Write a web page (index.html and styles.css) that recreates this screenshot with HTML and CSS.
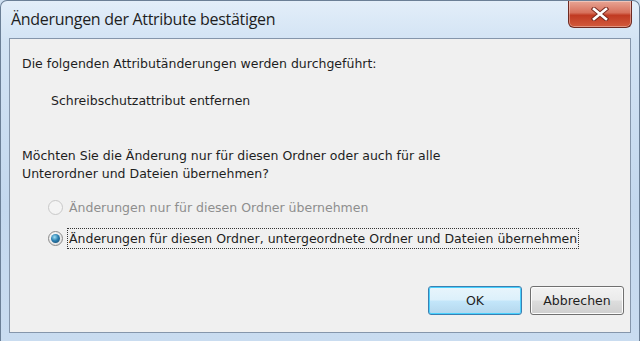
FILE: index.html
```html
<!DOCTYPE html>
<html lang="de">
<head>
    <meta charset="UTF-8">
    <title>Änderungen der Attribute bestätigen</title>
    <link rel="stylesheet" href="styles.css">
</head>
<body>
    <div class="window">
        <div class="titlebar">
            <span class="title">Änderungen der Attribute bestätigen</span>
            <button class="close-btn" aria-label="Schließen">
                <svg width="18" height="14" viewBox="0 0 18 14">
                    <path d="M3 2 L15 12 M15 2 L3 12" stroke="#7a2a20" stroke-width="4.5" stroke-linecap="square"/>
                    <path d="M3 2 L15 12 M15 2 L3 12" stroke="#ffffff" stroke-width="2.6" stroke-linecap="square"/>
                </svg>
            </button>
        </div>
        <div class="client">
            <p class="intro">Die folgenden Attributänderungen werden durchgeführt:</p>
            <p class="change">Schreibschutzattribut entfernen</p>
            <p class="question">Möchten Sie die Änderung nur für diesen Ordner oder auch für alle<br>Unterordner und Dateien übernehmen?</p>

            <div class="options">
                <label class="option disabled">
                    <span class="radio"></span>
                    <span class="option-text">Änderungen nur für diesen Ordner übernehmen</span>
                </label>
                <label class="option">
                    <span class="radio checked"></span>
                    <span class="option-text focused">Änderungen für diesen Ordner, untergeordnete Ordner und Dateien übernehmen</span>
                </label>
            </div>

            <div class="buttons">
                <button class="btn default">OK</button>
                <button class="btn">Abbrechen</button>
            </div>
        </div>
    </div>
</body>
</html>
```

FILE: styles.css
```css
body {
    margin: 0;
    width: 640px;
    height: 341px;
    overflow: hidden;
    background-color: #cfe0f1;
}
.window {
    box-sizing: border-box;
    width: 640px;
    height: 341px;
    display: flex;
    flex-direction: column;
    padding: 0 8px 8px 8px;
    border: 1px solid #6b7f96;
    border-bottom: none;
    border-radius: 7px 7px 0 0;
    background: linear-gradient(180deg, #e3eef9 0%, #d2e3f4 12%, #c4d8ee 60%, #c9dcf0 100%);
}
.titlebar {
    height: 37px;
    display: flex;
    align-items: flex-start;
}
.title {
    margin-top: 7px;
    margin-left: 2px;
    font-family: "Open Sans", sans-serif;
    font-size: 16px;
    letter-spacing: -0.3px;
    color: #1e1e1e;
}
.close-btn {
    margin-left: auto;
    margin-right: -1px;
    width: 64px;
    height: 27px;
    padding: 0;
    border: 1px solid #6e2a22;
    border-top: none;
    border-radius: 0 0 6px 6px;
    background: linear-gradient(180deg, #e8a595 0%, #d7715c 45%, #c13a22 55%, #d25a3c 100%);
    box-shadow: inset 0 0 0 1px rgba(255,255,255,0.35);
    display: flex;
    align-items: center;
    justify-content: center;
}
.client {
    flex: 1;
    display: flex;
    flex-direction: column;
    border: 1px solid #8596ab;
    background-color: #f0f0f0;
    padding: 0 6px 0 12px;
    font-family: "DejaVu Sans", sans-serif;
    font-size: 12.5px;
    color: #1e1e1e;
}
.client p {
    margin: 0;
}
.intro {
    margin-top: 17px !important;
}
.change {
    margin-top: 22px !important;
    margin-left: 29px !important;
}
.question {
    margin-top: 39px !important;
    line-height: 18px;
}
.options {
    margin-top: 14px;
    margin-left: 26px;
    display: flex;
    flex-direction: column;
    gap: 10px;
}
.option {
    display: flex;
    align-items: center;
    gap: 4px;
}
.option.disabled {
    color: #8e8e8e;
}
.radio {
    box-sizing: border-box;
    width: 15px;
    height: 15px;
    border-radius: 50%;
    border: 1px solid #8a8a8a;
    background: radial-gradient(circle at 40% 35%, #ffffff 0%, #e4e4e4 70%, #d0d0d0 100%);
    display: flex;
    align-items: center;
    justify-content: center;
}
.option.disabled .radio {
    border-color: #c8c8c8;
    background: #f4f4f4;
}
.radio.checked::after {
    content: "";
    width: 9px;
    height: 9px;
    border-radius: 50%;
    background: radial-gradient(circle at 40% 35%, #9fe0f5 0%, #2b7fb0 45%, #0f3f62 100%);
}
.option-text {
    padding: 2px 1px;
    border: 1px dotted transparent;
}
.option-text.focused {
    border-color: #333333;
}
.buttons {
    margin-top: auto;
    margin-bottom: 17px;
    display: flex;
    justify-content: flex-end;
    gap: 8px;
}
.btn {
    width: 94px;
    height: 29px;
    font-family: "DejaVu Sans", sans-serif;
    font-size: 12.5px;
    color: #1e1e1e;
    border: 1px solid #707070;
    border-radius: 3px;
    background: linear-gradient(180deg, #f2f2f2 0%, #ebebeb 48%, #dddddd 52%, #cfcfcf 100%);
    box-shadow: inset 0 0 0 1px #fcfcfc;
}
.btn.default {
    border-color: #3c7fb1;
    background: linear-gradient(180deg, #e8f5fc 0%, #dcf0fb 48%, #c3e6fa 52%, #b4d7ed 100%);
    box-shadow: inset 0 0 0 1px #48d1fe;
}
```
